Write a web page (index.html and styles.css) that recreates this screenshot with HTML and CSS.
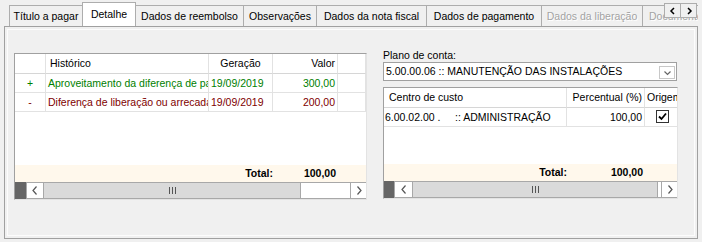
FILE: index.html
```html
<!DOCTYPE html>
<html lang="pt">
<head>
  <meta charset="UTF-8">
  <title>Detalhe</title>
  <link rel="stylesheet" href="styles.css">
</head>
<body>
  <div class="window">
    <div class="tabs">
      <div class="tab tab-titulo">Título a pagar</div>
      <div class="tab tab-detalhe active">Detalhe</div>
      <div class="tab tab-reembolso">Dados de reembolso</div>
      <div class="tab tab-obs">Observações</div>
      <div class="tab tab-nota">Dados da nota fiscal</div>
      <div class="tab tab-pagamento">Dados de pagamento</div>
      <div class="tab tab-liberacao disabled">Dados da liberação</div>
      <div class="tab tab-docs disabled">Documentos</div>
    </div>
    <div class="tab-scroll">
      <div class="tab-scroll-btn">
        <svg width="8" height="8" viewBox="0 0 8 8"><polyline points="5,1 2,4 5,7" fill="none" stroke="#000" stroke-width="1.5"/></svg>
      </div>
      <div class="tab-scroll-btn">
        <svg width="8" height="8" viewBox="0 0 8 8"><polyline points="3,1 6,4 3,7" fill="none" stroke="#000" stroke-width="1.5"/></svg>
      </div>
    </div>

    <div class="panel">
      <!-- lançamentos -->
      <div class="grid grid-left">
        <div class="row head">
          <div class="cell"></div>
          <div class="cell pad-l">Histórico</div>
          <div class="cell center">Geração</div>
          <div class="cell right">Valor</div>
          <div class="cell"></div>
        </div>
        <div class="row credit">
          <div class="cell center">+</div>
          <div class="cell">Aproveitamento da diferença de pagamento</div>
          <div class="cell">19/09/2019</div>
          <div class="cell right">300,00</div>
          <div class="cell"></div>
        </div>
        <div class="row debit">
          <div class="cell center">-</div>
          <div class="cell">Diferença de liberação ou arrecadação</div>
          <div class="cell">19/09/2019</div>
          <div class="cell right">200,00</div>
          <div class="cell"></div>
        </div>
        <div class="fill"></div>
        <div class="row foot">
          <div></div>
          <div></div>
          <div class="right">Total:</div>
          <div class="right pad-r">100,00</div>
          <div></div>
        </div>
        <div class="hscroll">
          <div class="corner"></div>
          <div class="sb-btn">
            <svg width="6" height="9" viewBox="0 0 6 9"><polyline points="4.5,0.5 1,4.5 4.5,8.5" fill="none" stroke="#555" stroke-width="1.2"/></svg>
          </div>
          <div class="sb-thumb"><span class="grip"></span></div>
          <div class="sb-track"></div>
          <div class="sb-btn last">
            <svg width="6" height="9" viewBox="0 0 6 9"><polyline points="1.5,0.5 5,4.5 1.5,8.5" fill="none" stroke="#555" stroke-width="1.2"/></svg>
          </div>
        </div>
      </div>

      <!-- plano / centro de custo -->
      <div class="side">
        <div class="label">Plano de conta:</div>
        <div class="combo">
          <span class="combo-text">5.00.00.06 :: MANUTENÇÃO DAS INSTALAÇÕES</span>
          <span class="combo-btn">
            <svg width="9" height="6" viewBox="0 0 9 6"><polyline points="1.5,1.5 4.5,4.5 7.5,1.5" fill="none" stroke="#666" stroke-width="1.2"/></svg>
          </span>
        </div>
        <div class="grid grid-right">
          <div class="row head">
            <div class="cell pad-l2">Centro de custo</div>
            <div class="cell right">Percentual (%)</div>
            <div class="cell">Origem</div>
          </div>
          <div class="row">
            <div class="cell tight">6.00.02.00 .     :: ADMINISTRAÇÃO</div>
            <div class="cell right">100,00</div>
            <div class="cell check-cell"><span class="check"><svg width="11" height="11" viewBox="0 0 11 11"><polyline points="2,5.5 4.5,8 9,2.5" fill="none" stroke="#000" stroke-width="1.8"/></svg></span></div>
          </div>
          <div class="fill"></div>
          <div class="row foot">
            <div class="right">Total:</div>
            <div class="right pad-r">100,00</div>
            <div></div>
          </div>
          <div class="hscroll">
            <div class="corner narrow"></div>
            <div class="sb-btn wide">
              <svg width="6" height="9" viewBox="0 0 6 9"><polyline points="4.5,0.5 1,4.5 4.5,8.5" fill="none" stroke="#555" stroke-width="1.2"/></svg>
            </div>
            <div class="sb-thumb long"><span class="grip"></span></div>
            <div class="sb-track short"></div>
            <div class="sb-btn last">
              <svg width="6" height="9" viewBox="0 0 6 9"><polyline points="1.5,0.5 5,4.5 1.5,8.5" fill="none" stroke="#555" stroke-width="1.2"/></svg>
            </div>
          </div>
        </div>
      </div>
    </div>
  </div>
</body>
</html>
```

FILE: styles.css
```css
body {
  margin: 0;
  background: #f0f0f0;
  font-family: "Liberation Sans", Arial, sans-serif;
  font-size: 10.5px;
  color: #000;
}
.window {
  position: relative;
  width: 702px;
  height: 242px;
}

/* abas */
.tabs {
  display: flex;
  align-items: flex-end;
  width: 689px;
  height: 26px;
  padding-left: 9px;
  overflow: hidden;
  position: relative;
  z-index: 2;
}
.tab {
  flex: none;
  box-sizing: border-box;
  height: 21px;
  line-height: 21px;
  border: 1px solid #adadad;
  border-bottom: none;
  margin-right: -1px;
  background: #f0f0f0;
  text-align: center;
  white-space: nowrap;
  overflow: hidden;
}
.tab.active {
  height: 25px;
  line-height: 22px;
  margin-bottom: -1px;
  background: #fff;
  position: relative;
  z-index: 3;
}
.tab.disabled {
  color: #a3a3a3;
  text-shadow: 1px 1px 0 #fff;
}
.tab-titulo { width: 74px; }
.tab-detalhe { width: 54px; }
.tab-reembolso { width: 109px; }
.tab-obs { width: 74px; }
.tab-nota { width: 111px; }
.tab-pagamento { width: 116px; }
.tab-liberacao { width: 102px; }
.tab-docs { width: 100px; text-align: left; padding-left: 6px; }

.tab-scroll {
  position: absolute;
  top: 3px;
  left: 664px;
  display: flex;
  z-index: 4;
}
.tab-scroll-btn {
  box-sizing: border-box;
  width: 17px;
  height: 15px;
  border: 1px solid #adadad;
  margin-right: -1px;
  background: #f0f0f0;
  display: flex;
  align-items: center;
  justify-content: center;
}

/* painel */
.panel {
  box-sizing: border-box;
  margin-left: 4px;
  width: 694px;
  height: 213px;
  border: 1px solid #a0a0a0;
  box-shadow: inset 0 0 0 2px #f0f0f0, inset 0 0 0 3px #fcfcfc;
  display: flex;
  align-items: flex-start;
  gap: 16px;
  padding-left: 9px;
  position: relative;
  z-index: 1;
}

/* grades */
.grid {
  box-sizing: border-box;
  border: 1px solid;
  border-color: #a0a0a0 #e3e3e3 #e3e3e3 #a0a0a0;
  background: #fff;
  display: flex;
  flex-direction: column;
  overflow: hidden;
}
.grid-left {
  width: 353px;
  height: 147px;
  margin-top: 26px;
}
.grid-left .row { grid-template-columns: 31px 163px 64px 65px 28px; }
.grid-right {
  width: 295px;
  height: 112px;
  margin-top: 6px;
}
.grid-right .row { grid-template-columns: 183px 78px 40px; }

.row {
  display: grid;
  flex: none;
  height: 19px;
}
.cell {
  box-sizing: border-box;
  border-right: 1px solid #e2e2e2;
  border-bottom: 1px solid #e2e2e2;
  padding: 0 2px;
  line-height: 18px;
  white-space: nowrap;
  overflow: hidden;
}
.head { height: 20px; }
.head .cell {
  line-height: 19px;
  border-bottom-color: #d6d6d6;
}
.center { text-align: center; }
.right { text-align: right; }
.pad-l { padding-left: 4px; }
.pad-l2 { padding-left: 5px; }
.tight { padding-left: 1px; white-space: pre; }
.credit { color: #008000; }
.debit { color: #800000; }
.fill { flex: 1; }

.foot {
  height: 17px;
  line-height: 17px;
  background: #fff8ec;
  font-weight: bold;
}
.foot .pad-r { padding-right: 2px; }

.check-cell { padding-left: 11px; padding-top: 2px; }
.check {
  display: block;
  box-sizing: border-box;
  width: 13px;
  height: 13px;
  border: 1px solid #333;
  background: #fff;
}
.check svg { display: block; }

/* barra de rolagem */
.hscroll {
  flex: none;
  display: flex;
  height: 17px;
  box-sizing: border-box;
  border-top: 1px solid #a8a8a8;
  border-bottom: 1px solid #a8a8a8;
}
.corner {
  width: 11px;
  background: #666;
  margin: -1px 0;
}
.corner.narrow { width: 10px; }
.sb-btn {
  box-sizing: border-box;
  width: 17px;
  background: #fff;
  border-left: 1px solid #a8a8a8;
  display: flex;
  align-items: center;
  justify-content: center;
}
.sb-btn.wide { width: 18px; }
.sb-btn.last { width: 16px; }
.sb-thumb {
  box-sizing: border-box;
  width: 258px;
  background: #dadada;
  border-left: 1px solid #a8a8a8;
  border-right: 1px solid #a8a8a8;
  display: flex;
  align-items: center;
  justify-content: center;
}
.sb-thumb.long { width: 246px; }
.sb-track {
  width: 49px;
  background: #fff;
}
.sb-track.short { width: 3px; }
.grip {
  width: 7px;
  height: 7px;
  background: linear-gradient(90deg, #555 0 1px, transparent 1px 3px, #555 3px 4px, transparent 4px 6px, #555 6px 7px);
}

/* lado direito */
.side {
  width: 295px;
  margin-top: 22px;
  display: flex;
  flex-direction: column;
}
.label {
  line-height: 13px;
  height: 13px;
}
.combo {
  box-sizing: border-box;
  width: 294px;
  height: 19px;
  border: 1px solid #a0a0a0;
  background: #fff;
  display: flex;
  padding-left: 2px;
}
.combo-text {
  flex: 1;
  line-height: 17px;
  white-space: nowrap;
}
.combo-btn {
  align-self: flex-end;
  box-sizing: border-box;
  width: 16px;
  height: 13px;
  margin: 0 1px 1px 0;
  border: 1px solid #c8c8c8;
  background: #fff;
  display: flex;
  align-items: center;
  justify-content: center;
}
```
